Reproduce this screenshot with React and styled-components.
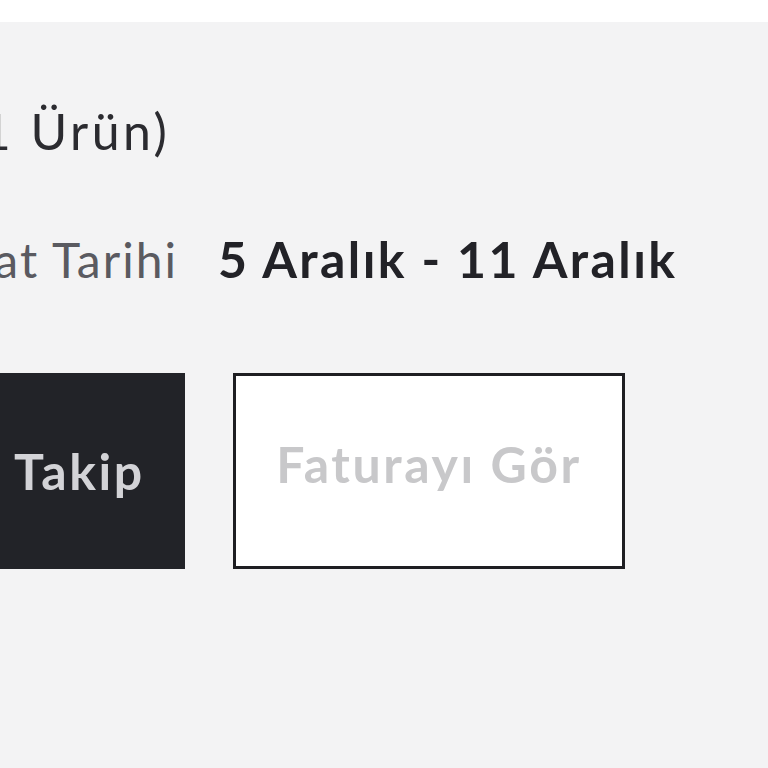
import styled, { createGlobalStyle } from "styled-components";

const GlobalStyle = createGlobalStyle`
  html, body {
    margin: 0;
    padding: 0;
    background: #ffffff;
    overflow: hidden;
  }
  body {
    font-family: Lato, "Noto Sans", Arial, sans-serif;
  }
`;

const Page = styled.div`
  width: 768px;
  height: 768px;
  display: flex;
  flex-direction: column;
  background: #ffffff;
`;

const TopStrip = styled.div`
  height: 22px;
  flex-shrink: 0;
  background: #ffffff;
`;

const Panel = styled.section`
  flex: 1;
  background: #f3f3f4;
  overflow: hidden;
`;

const Content = styled.div`
  margin-left: -207px;
  padding-top: 79px;
  display: flex;
  flex-direction: column;
`;

const Title = styled.h2`
  margin: 0 0 0 -33px;
  font-size: 50px;
  font-weight: 400;
  line-height: 60px;
  letter-spacing: 3.5px;
  color: #2b2b30;
  white-space: nowrap;
`;

const InfoRow = styled.div`
  margin-top: 68px;
  display: grid;
  grid-template-columns: 385px auto;
  column-gap: 40px;
  align-items: baseline;
  white-space: nowrap;
`;

const Label = styled.span`
  text-align: right;
  font-size: 48px;
  font-weight: 400;
  letter-spacing: 2px;
  color: #5a5a60;
`;

const Value = styled.span`
  font-size: 50px;
  font-weight: 700;
  letter-spacing: 2.4px;
  color: #222227;
`;

const Actions = styled.div`
  margin-top: 84px;
  display: flex;
  gap: 48px;
`;

const Button = styled.button`
  width: 392px;
  height: 196px;
  box-sizing: border-box;
  display: flex;
  align-items: center;
  justify-content: center;
  padding: ${(p) => (p.$outline ? "0 0 14px" : "0 0 0 22px")};
  font-family: inherit;
  font-size: 50px;
  font-weight: 700;
  letter-spacing: 2.6px;
  white-space: nowrap;
  cursor: pointer;
  background: ${(p) => (p.$outline ? "#ffffff" : "#222328")};
  color: ${(p) => (p.$outline ? "#c8c8ca" : "#d3d3d7")};
  border: ${(p) => (p.$outline ? "3px solid #1e1e22" : "none")};
`;

export default function App() {
  return (
    <Page>
      <GlobalStyle />
      <TopStrip />
      <Panel>
        <Content>
          <Title>Paket 1 (1 Ürün)</Title>
          <InfoRow>
            <Label>Teslimat Tarihi</Label>
            <Value>5 Aralık - 11 Aralık</Value>
          </InfoRow>
          <Actions>
            <Button>Kargo Takip</Button>
            <Button $outline>Faturayı Gör</Button>
          </Actions>
        </Content>
      </Panel>
    </Page>
  );
}
